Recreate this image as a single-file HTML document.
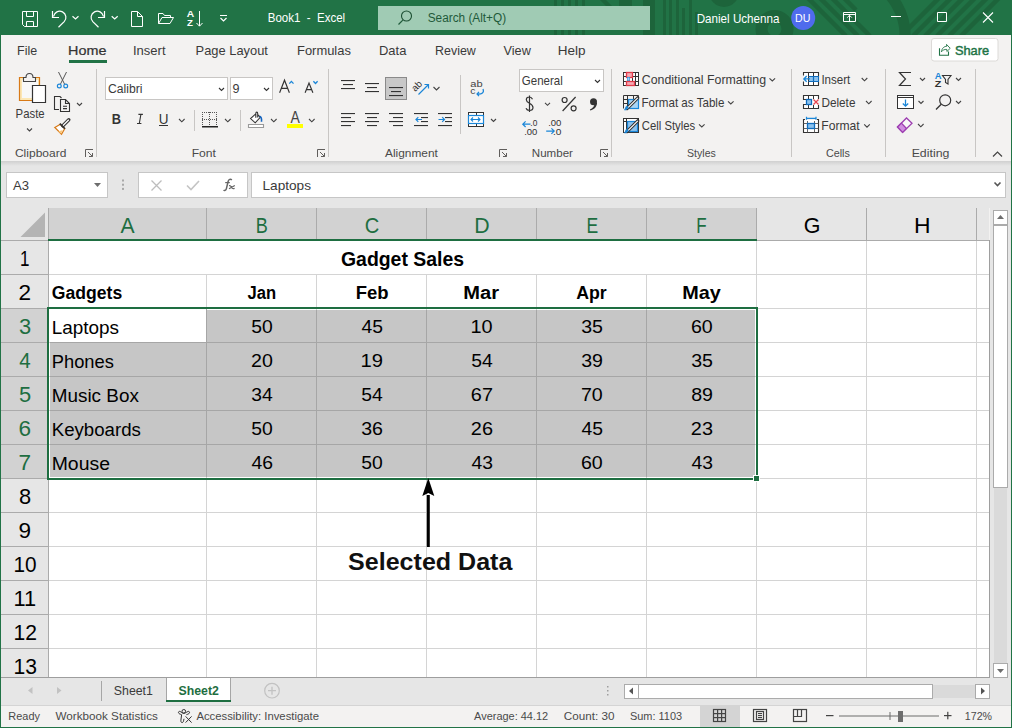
<!DOCTYPE html>
<html><head><meta charset="utf-8"><title>Excel</title>
<style>html,body{margin:0;padding:0;background:#f3f2f1;overflow:hidden}svg{display:block}text{white-space:pre;font-family:"Liberation Sans",sans-serif}</style>
</head><body>
<svg width="1012" height="728" viewBox="0 0 1012 728">
<rect x="0" y="0" width="1012" height="728" fill="#f3f2f1" />
<rect x="0" y="0" width="1012" height="35" fill="#217346" />
<defs><clipPath id="tb"><rect x="0" y="0" width="1012" height="35"/></clipPath></defs>
<g clip-path="url(#tb)" fill="#1d643b"><rect x="554" y="0" width="3" height="35"/><rect x="561" y="0" width="3" height="35"/><rect x="568" y="0" width="3" height="35"/><rect x="575" y="0" width="3" height="35"/><rect x="582" y="0" width="3" height="35"/><path d="M600,0 H606 L612,6 H606 Z"/><rect x="619" y="0" width="13" height="6"/><rect x="643" y="0" width="12" height="35"/><rect x="663" y="0" width="3" height="35"/><rect x="669" y="0" width="3" height="35"/><rect x="676" y="0" width="3" height="35"/><rect x="682" y="8" width="3" height="27"/><rect x="689" y="0" width="3" height="35"/><rect x="695" y="12" width="3" height="23"/><circle cx="724" cy="-8" r="15"/></g>
<g clip-path="url(#tb)" fill="none" stroke="#1d643b"><circle cx="774.5" cy="29" r="13" stroke-width="12"/><circle cx="850" cy="40" r="70" stroke-width="10" stroke="none"/><path d="M870,-20 A62,62 0 0 1 905,40" stroke-width="11"/><path d="M806,-4 L846,36 M818,-4 L858,36 M830,-4 L870,36 M842,-4 L856,10" stroke-width="4.5"/><path d="M941,-4 L901,36 M953,-4 L913,36 M965,-4 L925,36 M977,-4 L937,36 M989,-4 L949,36 M1001,-4 L961,36" stroke-width="4.5"/></g>
<g fill="none" stroke="#ffffff" stroke-width="1">
<path d="M22.5,11.5 H37.5 V26.5 H24.5 L22.5,24.5 Z M26.5,11.5 V16.5 H33.5 V11.5 M26.5,26.5 V21.5 H33.5 V26.5" fill="none" stroke="#fff" stroke-width="1" />
<path d="M52.5,11 V17.5 H59 M53.6,16.4 A6.2,6.2 0 1 1 64.2,21.7 L58.5,27.3" fill="none" stroke="#fff" stroke-width="1.2" />
<path d="M104.5,11 V17.5 H98 M103.4,16.4 A6.2,6.2 0 1 0 92.8,21.7 L98.5,27.3" fill="none" stroke="#fff" stroke-width="1.2" />
<path d="M72.5,16.2 L75.5,19 L78.5,16.2 M111.7,16.2 L114.7,19 L117.7,16.2" fill="none" stroke="#fff" stroke-width="1.2" />
<path d="M131.5,11.5 H137.5 L142.5,16.5 V26.5 H131.5 Z M137.5,11.5 V16.5 H142.5" fill="none" stroke="#fff" stroke-width="1" />
<path d="M158.5,23.5 V13.5 H163 L164.5,15.5 H170.5 V18 M158.5,23.5 H170 L173.5,17.5 H162 Z" fill="none" stroke="#fff" stroke-width="1" />
<path d="M199.5,11 V26 M196.5,23 L199.5,26.2 L202.5,23" fill="none" stroke="#fff" stroke-width="1" />
<path d="M220,15.5 H227 M220.5,18 L223.5,21 L226.5,18" fill="none" stroke="#fff" stroke-width="1.2" />
</g>
<text transform="translate(186.64,17.20) scale(1.2102,1)" font-family="Liberation Sans" font-size="8.53" font-weight="bold" fill="#fff">A</text>
<text transform="translate(187.05,26.20) scale(1.1351,1)" font-family="Liberation Sans" font-size="8.53" font-weight="bold" fill="#fff">Z</text>
<text transform="translate(267.80,21.80) scale(0.8998,1)" font-family="Liberation Sans" font-size="12.80" font-weight="normal" fill="#ffffff">Book1  -  Excel</text>
<rect x="378" y="6" width="272" height="24" fill="#a0cbb4" />
<circle cx="406.5" cy="16" r="5" fill="none" stroke="#1c4f33" stroke-width="1.1"/>
<path d="M398.5,24.5 L402.8,20.2" fill="none" stroke="#1f5a3a" stroke-width="1.2" />
<text transform="translate(427.73,22.00) scale(0.9442,1)" font-family="Liberation Sans" font-size="12.52" font-weight="normal" fill="#1f5a3a">Search (Alt+Q)</text>
<text transform="translate(696.69,22.70) scale(0.9744,1)" font-family="Liberation Sans" font-size="11.95" font-weight="normal" fill="#ffffff">Daniel Uchenna</text>
<circle cx="803.2" cy="18" r="12" fill="#4f6bed"/>
<text transform="translate(794.97,22.30) scale(0.9446,1)" font-family="Liberation Sans" font-size="11.24" font-weight="normal" fill="#ffffff">DU</text>
<g fill="none" stroke="#fff" stroke-width="1">
<path d="M843.5,12.5 H855.5 V21.5 H843.5 Z M843.5,14.5 H855.5 M849.5,21.5 V15.3 M847.2,17.6 L849.5,15.3 L851.8,17.6" fill="none" stroke="#fff" stroke-width="1" />
<path d="M891,16.5 H901" fill="none" stroke="#fff" stroke-width="1" />
<path d="M937.5,12.5 H946.5 V21.5 H937.5 Z" fill="none" stroke="#fff" stroke-width="1" />
<path d="M983,12.5 L993,22.5 M993,12.5 L983,22.5" fill="none" stroke="#fff" stroke-width="1.1" />
</g>
<text transform="translate(17.03,55.00) scale(0.9735,1)" font-family="Liberation Sans" font-size="12.80" font-weight="normal" fill="#3a3a3a">File</text>
<text transform="translate(132.98,55.00) scale(1.0175,1)" font-family="Liberation Sans" font-size="12.80" font-weight="normal" fill="#3a3a3a">Insert</text>
<text transform="translate(195.59,55.00) scale(1.0067,1)" font-family="Liberation Sans" font-size="12.80" font-weight="normal" fill="#3a3a3a">Page Layout</text>
<text transform="translate(296.99,55.00) scale(1.0107,1)" font-family="Liberation Sans" font-size="12.80" font-weight="normal" fill="#3a3a3a">Formulas</text>
<text transform="translate(378.99,55.00) scale(1.0146,1)" font-family="Liberation Sans" font-size="12.80" font-weight="normal" fill="#3a3a3a">Data</text>
<text transform="translate(435.03,55.00) scale(0.9726,1)" font-family="Liberation Sans" font-size="12.80" font-weight="normal" fill="#3a3a3a">Review</text>
<text transform="translate(503.60,55.00) scale(0.9903,1)" font-family="Liberation Sans" font-size="12.80" font-weight="normal" fill="#3a3a3a">View</text>
<text transform="translate(557.74,55.00) scale(1.0562,1)" font-family="Liberation Sans" font-size="12.80" font-weight="normal" fill="#3a3a3a">Help</text>
<text transform="translate(68.08,55.00) scale(1.1218,1)" font-family="Liberation Sans" font-size="12.80" font-weight="normal" fill="#333333" stroke="#333333" stroke-width="0.22">Home</text>
<rect x="69" y="60" width="38" height="3" fill="#217346" />
<rect x="931.5" y="38.5" width="66.5" height="22.5" rx="2.5" fill="#ffffff" stroke="#dcdad8"/>
<path d="M939.5,48.2 V55.3 H948.5 V51.5" fill="none" stroke="#217346" stroke-width="1.1" />
<path d="M941.4,51.8 C942,47.8 944.3,46.4 946.7,46.3 L946.5,44.4 L950.2,48.3 L946.9,51.5 L946.8,49.4 C944.5,49.2 942.6,50.2 941.4,51.8 Z" fill="none" stroke="#217346" stroke-width="0.9" />
<text transform="translate(954.90,54.90) scale(0.9909,1)" font-family="Liberation Sans" font-size="12.94" font-weight="normal" fill="#217346" stroke="#217346" stroke-width="0.45">Share</text>
<rect x="96" y="69" width="1" height="88" fill="#c8c6c4" />
<rect x="328" y="69" width="1" height="88" fill="#c8c6c4" />
<rect x="611" y="69" width="1" height="88" fill="#c8c6c4" />
<rect x="791" y="69" width="1" height="88" fill="#c8c6c4" />
<rect x="885" y="69" width="1" height="88" fill="#c8c6c4" />
<rect x="975" y="69" width="1" height="88" fill="#c8c6c4" />
<rect x="460" y="75" width="1" height="59" fill="#c8c6c4" />
<rect x="194" y="110" width="1" height="21" fill="#c8c6c4" />
<rect x="240" y="110" width="1" height="21" fill="#c8c6c4" />
<defs><linearGradient id="sh" x1="0" y1="0" x2="0" y2="1"><stop offset="0" stop-color="#d0d0d0"/><stop offset="1" stop-color="#e6e6e6"/></linearGradient></defs>
<rect x="1" y="161" width="1010" height="5" fill="url(#sh)" />
<rect x="1" y="166" width="1010" height="42" fill="#e6e6e6" />
<text transform="translate(14.94,156.60) scale(1.0696,1)" font-family="Liberation Sans" font-size="11.24" font-weight="normal" fill="#4a4a4a">Clipboard</text>
<text transform="translate(191.65,156.60) scale(1.0812,1)" font-family="Liberation Sans" font-size="11.24" font-weight="normal" fill="#4a4a4a">Font</text>
<text transform="translate(385.00,156.60) scale(1.0580,1)" font-family="Liberation Sans" font-size="11.24" font-weight="normal" fill="#4a4a4a">Alignment</text>
<text transform="translate(531.80,156.60) scale(1.0300,1)" font-family="Liberation Sans" font-size="11.24" font-weight="normal" fill="#4a4a4a">Number</text>
<text transform="translate(687.07,156.60) scale(0.9400,1)" font-family="Liberation Sans" font-size="11.24" font-weight="normal" fill="#4a4a4a">Styles</text>
<text transform="translate(825.90,156.60) scale(0.9587,1)" font-family="Liberation Sans" font-size="11.24" font-weight="normal" fill="#4a4a4a">Cells</text>
<text transform="translate(911.64,156.60) scale(1.0991,1)" font-family="Liberation Sans" font-size="11.24" font-weight="normal" fill="#4a4a4a">Editing</text>
<path d="M85.5,157 V149.5 H93 M88,152 L92.5,156.5 M89,156.5 H92.5 V153" fill="none" stroke="#605e5c" stroke-width="1" />
<path d="M317.5,157 V149.5 H325 M320,152 L324.5,156.5 M321,156.5 H324.5 V153" fill="none" stroke="#605e5c" stroke-width="1" />
<path d="M499.5,157 V149.5 H507 M502,152 L506.5,156.5 M503,156.5 H506.5 V153" fill="none" stroke="#605e5c" stroke-width="1" />
<path d="M600.5,157 V149.5 H608 M603,152 L607.5,156.5 M604,156.5 H607.5 V153" fill="none" stroke="#605e5c" stroke-width="1" />
<path d="M993,156.5 L997.5,152 L1002,156.5" fill="none" stroke="#444" stroke-width="1.2" />
<path d="M19.5,77.5 H39.5 V100.5 H19.5 Z" fill="#fce7b5" stroke="#d87a17" stroke-width="1.2" />
<rect x="22" y="80" width="16" height="18" fill="#f8f8f8" />
<path d="M23.5,81.5 V77.5 H26 C26,75 27.5,73.5 29.5,73.5 C31.5,73.5 33,75 33,77.5 H35.5 V81.5 Z" fill="#f3f2f1" stroke="#444" stroke-width="1.1" />
<path d="M32.5,85.5 H45.5 V102.5 H32.5 Z" fill="#ffffff" stroke="#333" stroke-width="1.2" />
<text transform="translate(15.61,117.90) scale(0.9287,1)" font-family="Liberation Sans" font-size="12.23" font-weight="normal" fill="#3a3a3a">Paste</text>
<path d="M27,128.5 L29.5,131 L32,128.5" fill="none" stroke="#444" stroke-width="1.1" />
<path d="M58.5,72 L64.5,84 M66.5,72 L60.5,84" fill="none" stroke="#555" stroke-width="1" />
<circle cx="59.3" cy="86" r="1.9" fill="none" stroke="#1a86d8" stroke-width="1.2"/><circle cx="65.7" cy="86" r="1.9" fill="none" stroke="#1a86d8" stroke-width="1.2"/>
<path d="M59,109.5 H54.5 V96.5 H60 L61.5,98 M60.5,111.5 V99.5 H65.5 L69.5,103.5 V111.5 Z M65.5,99.5 V103.5 H69.5 M63,106.3 H67 M63,108.6 H67" fill="none" stroke="#333" stroke-width="1.1" />
<path d="M77,103 L79.5,105.5 L82,103" fill="none" stroke="#444" stroke-width="1.1" />
<path d="M54.8,127.5 L60.3,124.3 L64.7,128.7 L61.5,134.3 Z" fill="#ffffff" stroke="#d87a17" stroke-width="1.3" />
<path d="M58.3,131.5 L62.7,130 L61.3,133.7 Z" fill="#f9c77c" stroke="none" stroke-width="1" />
<path d="M62.8,125.8 L68.8,119.8" fill="none" stroke="#333" stroke-width="3.4" stroke-linecap="round"/>
<path d="M62.8,125.8 L68.8,119.8" fill="none" stroke="#fff" stroke-width="1.3" />
<path d="M59.8,123.6 L65,128.8" fill="none" stroke="#333" stroke-width="1.6" />
<rect x="105.5" y="77.5" width="122" height="22" fill="#ffffff" stroke="#c8c6c4" stroke-width="1" />
<text transform="translate(108.03,92.80) scale(0.9610,1)" font-family="Liberation Sans" font-size="12.66" font-weight="normal" fill="#3a3a3a">Calibri</text>
<path d="M219,88 L221.5,90.5 L224,88" fill="none" stroke="#333" stroke-width="1.1" />
<rect x="230.5" y="77.5" width="42" height="22" fill="#ffffff" stroke="#c8c6c4" stroke-width="1" />
<text transform="translate(232.61,93.00) scale(1.0536,1)" font-family="Liberation Sans" font-size="11.95" font-weight="normal" fill="#3a3a3a">9</text>
<path d="M264,88 L266.5,90.5 L269,88" fill="none" stroke="#333" stroke-width="1.1" />
<path d="M279.6,92.7 L284.5,80.2 L289.4,92.7 M281.3,88.3 H287.7" fill="none" stroke="#333" stroke-width="1.15" />
<path d="M289.3,83.6 L291.4,81.4 L293.5,83.6" fill="none" stroke="#1a86d8" stroke-width="1.3" />
<path d="M305.1,92.7 L309,83 L312.9,92.7 M306.4,89.6 H311.6" fill="none" stroke="#333" stroke-width="1.15" />
<path d="M313.4,81.3 L315.5,83.5 L317.6,81.3" fill="none" stroke="#1a86d8" stroke-width="1.3" />
<text transform="translate(111.70,123.70) scale(0.9278,1)" font-family="Liberation Sans" font-size="13.80" font-weight="bold" fill="#333">B</text>
<path d="M138.4,114.4 H142.9 M137,123.5 H141.4 M140.9,114.4 L139.3,123.5" fill="none" stroke="#333" stroke-width="1.1" />
<text transform="translate(158.66,123.70) scale(0.9767,1)" font-family="Liberation Sans" font-size="13.80" font-weight="normal" fill="#333">U</text>
<rect x="159" y="125" width="9" height="1" fill="#333" />
<path d="M179,119 L181.8,121.8 L184.6,119" fill="none" stroke="#444" stroke-width="1.1" />
<path d="M225,119 L227.8,121.8 L230.6,119" fill="none" stroke="#444" stroke-width="1.1" />
<path d="M271,119 L273.8,121.8 L276.6,119" fill="none" stroke="#444" stroke-width="1.1" />
<path d="M309,119 L311.8,121.8 L314.6,119" fill="none" stroke="#444" stroke-width="1.1" />
<g fill="#555"><rect x="202" y="112" width="1" height="1"/><rect x="202" y="119" width="1" height="1"/><rect x="204" y="112" width="1" height="1"/><rect x="204" y="119" width="1" height="1"/><rect x="206" y="112" width="1" height="1"/><rect x="206" y="119" width="1" height="1"/><rect x="208" y="112" width="1" height="1"/><rect x="208" y="119" width="1" height="1"/><rect x="210" y="112" width="1" height="1"/><rect x="210" y="119" width="1" height="1"/><rect x="212" y="112" width="1" height="1"/><rect x="212" y="119" width="1" height="1"/><rect x="214" y="112" width="1" height="1"/><rect x="214" y="119" width="1" height="1"/><rect x="216" y="112" width="1" height="1"/><rect x="216" y="119" width="1" height="1"/><rect x="202" y="112" width="1" height="1"/><rect x="209" y="112" width="1" height="1"/><rect x="216" y="112" width="1" height="1"/><rect x="202" y="114" width="1" height="1"/><rect x="209" y="114" width="1" height="1"/><rect x="216" y="114" width="1" height="1"/><rect x="202" y="116" width="1" height="1"/><rect x="209" y="116" width="1" height="1"/><rect x="216" y="116" width="1" height="1"/><rect x="202" y="118" width="1" height="1"/><rect x="209" y="118" width="1" height="1"/><rect x="216" y="118" width="1" height="1"/><rect x="202" y="120" width="1" height="1"/><rect x="209" y="120" width="1" height="1"/><rect x="216" y="120" width="1" height="1"/><rect x="202" y="122" width="1" height="1"/><rect x="209" y="122" width="1" height="1"/><rect x="216" y="122" width="1" height="1"/><rect x="202" y="124" width="1" height="1"/><rect x="209" y="124" width="1" height="1"/><rect x="216" y="124" width="1" height="1"/></g>
<rect x="202" y="126" width="16" height="1.5" fill="#222" />
<path d="M248.5,124.5 H263.5 V127.5 H248.5 Z" fill="#fff" stroke="#9a9a9a" stroke-width="1.1" />
<path d="M255.8,113.8 L250.6,118.6 L255.2,122.8 L260.3,117.3 L257.5,114.5 M255.8,117.8 V113.8 C255.8,111.6 257.7,111.6 257.7,113.8 V117.5" fill="#fff" stroke="#333" stroke-width="1.1" />
<path d="M259.6,116.4 C261.2,116.8 261.8,118.5 261.5,121.8" fill="none" stroke="#1565c0" stroke-width="1.6" />
<text transform="translate(290.50,123.00) scale(0.8943,1)" font-family="Liberation Sans" font-size="15.64" font-weight="normal" fill="#444">A</text>
<rect x="287" y="124" width="16" height="4" fill="#ffff00" />
<rect x="341" y="80" width="14" height="1.1" fill="#333" />
<rect x="343" y="84" width="10" height="1.1" fill="#333" />
<rect x="341" y="88" width="14" height="1.1" fill="#333" />
<rect x="365" y="83" width="14" height="1.1" fill="#333" />
<rect x="367" y="87" width="10" height="1.1" fill="#333" />
<rect x="365" y="91" width="14" height="1.1" fill="#333" />
<rect x="385.5" y="77.5" width="21" height="22" fill="#c8c8c8" stroke="#8a8a8a" stroke-width="1" />
<rect x="389" y="87" width="14" height="1.1" fill="#333" />
<rect x="391" y="91" width="10" height="1.1" fill="#333" />
<rect x="389" y="95" width="14" height="1.1" fill="#333" />
<text transform="translate(415.2,92) rotate(-45)" font-family="Liberation Sans" font-size="9.6" fill="#333">ab</text>
<path d="M418.5,94.5 L428.5,84.5 M424.5,84.5 H428.5 V88.5" fill="none" stroke="#1a86d8" stroke-width="1.2" />
<path d="M433.5,87 L436.5,90 L439.5,87" fill="none" stroke="#444" stroke-width="1.1" />
<rect x="341" y="113" width="14" height="1.1" fill="#333" />
<rect x="341" y="117" width="10" height="1.1" fill="#333" />
<rect x="341" y="121" width="14" height="1.1" fill="#333" />
<rect x="341" y="125" width="10" height="1.1" fill="#333" />
<rect x="365" y="113" width="14" height="1.1" fill="#333" />
<rect x="367" y="117" width="10" height="1.1" fill="#333" />
<rect x="365" y="121" width="14" height="1.1" fill="#333" />
<rect x="367" y="125" width="10" height="1.1" fill="#333" />
<rect x="389" y="113" width="14" height="1.1" fill="#333" />
<rect x="393" y="117" width="10" height="1.1" fill="#333" />
<rect x="389" y="121" width="14" height="1.1" fill="#333" />
<rect x="393" y="125" width="10" height="1.1" fill="#333" />
<rect x="414" y="113" width="14" height="1.1" fill="#333" />
<rect x="421" y="117" width="7" height="1.1" fill="#333" />
<rect x="421" y="121" width="7" height="1.1" fill="#333" />
<rect x="414" y="125" width="14" height="1.1" fill="#333" />
<path d="M416,119.5 H422 M418.3,117.2 L416,119.5 L418.3,121.8" fill="none" stroke="#1a86d8" stroke-width="1.2" />
<rect x="438" y="113" width="14" height="1.1" fill="#333" />
<rect x="445" y="117" width="7" height="1.1" fill="#333" />
<rect x="445" y="121" width="7" height="1.1" fill="#333" />
<rect x="438" y="125" width="14" height="1.1" fill="#333" />
<path d="M438.5,119.5 H444.5 M442.2,117.2 L444.5,119.5 L442.2,121.8" fill="none" stroke="#1a86d8" stroke-width="1.2" />
<text transform="translate(470.25,87.40) scale(1.1101,1)" font-family="Liberation Sans" font-size="9.96" font-weight="normal" fill="#444">ab</text>
<text transform="translate(470.28,94.30) scale(1.2361,1)" font-family="Liberation Sans" font-size="8.39" font-weight="normal" fill="#444">c</text>
<path d="M483,89 C484.5,92.5 482,94.5 477,94 M479,91.8 L477,94 L479,96.2" fill="none" stroke="#1a86d8" stroke-width="1.2" />
<rect x="468.5" y="112.5" width="15" height="14" fill="#fff" stroke="#333" stroke-width="1" />
<rect x="476" y="112" width="1" height="15" fill="#333" />
<rect x="468.5" y="115.5" width="15" height="8" fill="#fff" stroke="#1a86d8" stroke-width="1.2" />
<path d="M471,119.5 H480 M473,117.5 L471,119.5 L473,121.5 M478,117.5 L480,119.5 L478,121.5" fill="none" stroke="#1a86d8" stroke-width="1.1" />
<path d="M491,119 L493.5,121.5 L496,119" fill="none" stroke="#444" stroke-width="1.1" />
<rect x="519.5" y="69.5" width="84" height="22" fill="#ffffff" stroke="#c8c6c4" stroke-width="1" />
<text transform="translate(521.86,85.00) scale(0.9291,1)" font-family="Liberation Sans" font-size="12.37" font-weight="normal" fill="#3a3a3a">General</text>
<path d="M595,80 L597.5,82.5 L600,80" fill="none" stroke="#333" stroke-width="1.1" />
<path d="M532.5,99.2 C531.8,97.6 530.6,97 529.4,97 C527.5,97 526.3,98.3 526.3,99.8 C526.3,103.5 533,103 533,107.5 C533,109.2 531.6,110.5 529.5,110.5 C528,110.5 526.6,109.8 526,108.3 M529.5,95.5 V112" fill="none" stroke="#333" stroke-width="1.2" />
<path d="M545,102.8 L547.5,105.3 L550,102.8" fill="none" stroke="#444" stroke-width="1.1" />
<circle cx="564.6" cy="100" r="2.5" fill="none" stroke="#333" stroke-width="1.2"/><circle cx="573.6" cy="108.3" r="2.5" fill="none" stroke="#333" stroke-width="1.2"/>
<path d="M562.6,111 L575.6,97" fill="none" stroke="#333" stroke-width="1.2" />
<circle cx="593.5" cy="101.8" r="3.5" fill="#333"/>
<path d="M597,102.3 C597.2,106.2 594.8,109.3 590.2,110.6 L589.9,109.5 C592.6,108.4 594.2,106.8 594.4,104.6 Z" fill="#333" stroke="none" stroke-width="1" />
<text transform="translate(530.35,126.30) scale(0.9780,1)" font-family="Liberation Sans" font-size="8.53" font-weight="normal" fill="#333">.0</text>
<text transform="translate(524.16,134.50) scale(1.1108,1)" font-family="Liberation Sans" font-size="8.53" font-weight="normal" fill="#333">.00</text>
<path d="M522.8,124.2 H530.5 M525.6,121.4 L522.8,124.2 L525.6,127" fill="none" stroke="#1a86d8" stroke-width="1.2" />
<text transform="translate(548.15,126.30) scale(1.1199,1)" font-family="Liberation Sans" font-size="8.53" font-weight="normal" fill="#333">.00</text>
<text transform="translate(553.01,134.50) scale(1.1864,1)" font-family="Liberation Sans" font-size="8.53" font-weight="normal" fill="#333">.0</text>
<path d="M546.2,131.1 H554.2 M551.4,128.3 L554.2,131.1 L551.4,133.9" fill="none" stroke="#1a86d8" stroke-width="1.2" />
<rect x="623.5" y="72.5" width="15" height="13" fill="#fff" stroke="#333" stroke-width="1" />
<rect x="627" y="72" width="1" height="14" fill="#333" />
<rect x="632" y="72" width="1" height="14" fill="#333" />
<rect x="635" y="72" width="1" height="14" fill="#333" />
<rect x="623" y="76" width="16" height="1" fill="#333" />
<rect x="623" y="81" width="16" height="1" fill="#333" />
<rect x="626.5" y="72.5" width="6" height="5" fill="#f6a9b3" stroke="#e03c4a" stroke-width="1.3" />
<rect x="627" y="77" width="3" height="4" fill="#1a86d8" />
<rect x="627.5" y="77.5" width="2" height="3" fill="#9fd0f5" />
<rect x="626.5" y="81.5" width="8" height="4" fill="#f6a9b3" stroke="#e03c4a" stroke-width="1.3" />
<text transform="translate(641.72,84.40) scale(0.9456,1)" font-family="Liberation Sans" font-size="13.08" font-weight="normal" fill="#3a3a3a">Conditional Formatting</text>
<path d="M769.5,78.3 L772.3,81 L775.1,78.3" fill="none" stroke="#444" stroke-width="1.1" />
<path d="M623.5,108.5 V95.5 H638.5 V101 M623.5,99.5 H638 M623.5,103.5 H628 M627.5,95.5 V108 M633.5,95.5 V99" fill="none" stroke="#333" stroke-width="1" />
<rect x="628.5" y="99.5" width="10" height="9" fill="#a8d4f5" stroke="#1a86d8" stroke-width="1.2" />
<path d="M627,108.6 L637.8,97.8" fill="none" stroke="#333" stroke-width="3.2" stroke-linecap="round"/>
<path d="M627,108.6 L637.8,97.8" fill="none" stroke="#fff" stroke-width="1.2" />
<path d="M624.5,110 C626,110 627.3,109.3 628.3,107.5 L626.5,106 C625.5,107.5 625.5,109 624.5,110 Z" fill="#1a86d8" stroke="#1a86d8" stroke-width="0.8" />
<text transform="translate(641.39,107.30) scale(0.8878,1)" font-family="Liberation Sans" font-size="13.08" font-weight="normal" fill="#3a3a3a">Format as Table</text>
<path d="M728,101.3 L730.8,104 L733.6,101.3" fill="none" stroke="#444" stroke-width="1.1" />
<rect x="623.5" y="118.5" width="15" height="14" fill="#fff" stroke="#333" stroke-width="1" />
<rect x="623" y="121" width="16" height="1" fill="#333" />
<rect x="626" y="118" width="1" height="15" fill="#333" />
<rect x="627.5" y="121.5" width="10" height="10" fill="#8cc2ee" stroke="#1a86d8" stroke-width="1.2" />
<path d="M627,131.6 L637.8,120.8" fill="none" stroke="#333" stroke-width="3.2" stroke-linecap="round"/>
<path d="M627,131.6 L637.8,120.8" fill="none" stroke="#fff" stroke-width="1.2" />
<path d="M624.5,133 C626,133 627.3,132.3 628.3,130.5 L626.5,129 C625.5,130.5 625.5,132 624.5,133 Z" fill="#1a86d8" stroke="#1a86d8" stroke-width="0.8" />
<text transform="translate(641.77,129.90) scale(0.8654,1)" font-family="Liberation Sans" font-size="13.08" font-weight="normal" fill="#3a3a3a">Cell Styles</text>
<path d="M699,124.3 L701.8,127 L704.6,124.3" fill="none" stroke="#444" stroke-width="1.1" />
<rect x="804" y="73" width="14" height="12" fill="#ffffff" />
<path d="M803.5,75.5 V72.5 H818.5 V85.5 H803.5 V81.5" fill="none" stroke="#333" stroke-width="1.1" />
<rect x="808" y="72" width="1" height="14" fill="#333" />
<rect x="813" y="72" width="1" height="14" fill="#333" />
<rect x="809" y="76" width="10" height="6" fill="#8cc2ee" />
<path d="M808.5,76.5 H818.5 M808.5,81.5 H818.5 M813.5,76.5 V81.5" fill="none" stroke="#0f6cbd" stroke-width="1.2" />
<rect x="818" y="76" width="1" height="6" fill="#0f6cbd" />
<path d="M803.9,78.9 H810 M806.7,76.1 L803.9,78.9 L806.7,81.7" fill="none" stroke="#1a86d8" stroke-width="1.4" />
<text transform="translate(821.40,83.90) scale(0.9469,1)" font-family="Liberation Sans" font-size="12.23" font-weight="normal" fill="#3a3a3a">Insert</text>
<path d="M861.7,78 L864.5,80.8 L867.3,78" fill="none" stroke="#444" stroke-width="1.1" />
<rect x="804" y="96" width="14" height="12" fill="#ffffff" />
<path d="M806,99.5 H803.5 V95.5 H818.5 V99 M806,104.5 H803.5 V108.5 H818.5 V105" fill="none" stroke="#333" stroke-width="1.1" />
<path d="M808.5,95.5 V99 M813.5,95.5 V99 M808.5,105 V108.5 M813.5,105 V108.5" fill="none" stroke="#333" stroke-width="1" />
<rect x="806" y="99" width="6" height="6" fill="#8cc2ee" />
<rect x="806.5" y="99.5" width="5" height="5" fill="none" stroke="#0f6cbd" stroke-width="1.3" />
<path d="M813.5,99.5 L818.5,104.5 M818.5,99.5 L813.5,104.5" fill="none" stroke="#e8464f" stroke-width="1.3" />
<text transform="translate(821.38,107.00) scale(0.9645,1)" font-family="Liberation Sans" font-size="12.23" font-weight="normal" fill="#3a3a3a">Delete</text>
<path d="M866,101 L868.8,103.8 L871.6,101" fill="none" stroke="#444" stroke-width="1.1" />
<rect x="804" y="120" width="14" height="12" fill="#ffffff" />
<path d="M805,119.5 H803.5 V132.5 H818.5 V119.5 H817" fill="none" stroke="#333" stroke-width="1.1" />
<path d="M803.5,123.5 H818.5 M803.5,128.5 H818.5 M807.5,121 V132.5 M814.5,121 V132.5" fill="none" stroke="#555" stroke-width="0.9" />
<rect x="808" y="124" width="6" height="4" fill="#8cc2ee" />
<rect x="807.5" y="123.5" width="7" height="5" fill="none" stroke="#0f6cbd" stroke-width="1.3" />
<path d="M806.5,118.3 H816 M806.5,116.8 V119.8 M816,116.8 V119.8" fill="none" stroke="#1a86d8" stroke-width="1.2" />
<text transform="translate(821.35,129.80) scale(0.9801,1)" font-family="Liberation Sans" font-size="12.37" font-weight="normal" fill="#3a3a3a">Format</text>
<path d="M864.2,124.4 L867,127.2 L869.8,124.4" fill="none" stroke="#444" stroke-width="1.1" />
<path d="M911,72.5 H899.5 L905.5,79 L899.5,85.5 H911" fill="none" stroke="#333" stroke-width="1.2" />
<path d="M920,78 L922.5,80.5 L925,78" fill="none" stroke="#444" stroke-width="1.1" />
<text transform="translate(934.85,78.50) scale(1.0072,1)" font-family="Liberation Sans" font-size="9.39" font-weight="bold" fill="#1a86d8">A</text>
<text transform="translate(934.83,86.90) scale(1.1425,1)" font-family="Liberation Sans" font-size="9.39" font-weight="bold" fill="#333">Z</text>
<path d="M942.5,75.5 H951 L948,79.5 V84 L945.5,82.5 V79.5 Z" fill="none" stroke="#333" stroke-width="1.1" />
<path d="M956,78 L958.5,80.5 L961,78" fill="none" stroke="#444" stroke-width="1.1" />
<rect x="897.5" y="95.5" width="16" height="13" fill="#fff" stroke="#333" stroke-width="1" />
<rect x="897" y="97" width="17" height="1" fill="#333" />
<path d="M905.5,99.5 V106 M902.8,103.5 L905.5,106.2 L908.2,103.5" fill="none" stroke="#1a86d8" stroke-width="1.3" />
<path d="M918.5,101 L921,103.5 L923.5,101" fill="none" stroke="#444" stroke-width="1.1" />
<circle cx="945.2" cy="100.3" r="5.5" fill="none" stroke="#333" stroke-width="1.2"/>
<path d="M941.2,104.3 L936,109.5" fill="none" stroke="#333" stroke-width="1.3" />
<path d="M956,101 L958.5,103.5 L961,101" fill="none" stroke="#444" stroke-width="1.1" />
<path d="M897.5,127 L906.5,118 L912,123.3 L902.6,132.4 Z" fill="#f8f8f8" stroke="#9d3eb1" stroke-width="1.3" />
<path d="M897.5,127 L901.4,123.1 L906.5,128.5 L902.6,132.4 Z" fill="#d08ee0" stroke="#9d3eb1" stroke-width="1.3" />
<path d="M918,124 L920.8,126.8 L923.6,124" fill="none" stroke="#444" stroke-width="1.1" />
<rect x="6.5" y="172.5" width="101" height="25" fill="#ffffff" stroke="#c6c6c6" stroke-width="1" />
<text transform="translate(13.00,190.00) scale(1.0239,1)" font-family="Liberation Sans" font-size="12.80" font-weight="normal" fill="#3a3a3a">A3</text>
<path d="M94,183 H101 L97.5,187 Z" fill="#6d6d6d" stroke="none" stroke-width="1" />
<rect x="122" y="179.5" width="2" height="2" fill="#a8a8a8" />
<rect x="122" y="183.7" width="2" height="2" fill="#a8a8a8" />
<rect x="122" y="187.9" width="2" height="2" fill="#a8a8a8" />
<rect x="138.5" y="172.5" width="109" height="25" fill="#ffffff" stroke="#c6c6c6" stroke-width="1" />
<path d="M151.5,180.5 L161.5,190.5 M161.5,180.5 L151.5,190.5" fill="none" stroke="#bdbdbd" stroke-width="1.3" />
<path d="M187,185.5 L191,189.5 L199,181" fill="none" stroke="#c4c4c4" stroke-width="1.6" />
<path d="M231.8,180 C230.6,178.6 228.6,179.2 228.1,181.5 L226.4,188.6 C225.9,190.6 224.4,190.9 223.6,190" fill="none" stroke="#666" stroke-width="1.5" />
<path d="M225.2,182.6 H229.8" fill="none" stroke="#666" stroke-width="1.2" />
<path d="M229,185.6 C230.6,185.2 231.2,186.6 231.6,187.4 C232,188.4 233.2,188.9 234.6,188.4 M234.8,185.4 L229,188.8" fill="none" stroke="#666" stroke-width="1.2" />
<rect x="251.5" y="172.5" width="754" height="25" fill="#ffffff" stroke="#c6c6c6" stroke-width="1" />
<text transform="translate(262.54,190.30) scale(1.0646,1)" font-family="Liberation Sans" font-size="12.80" font-weight="normal" fill="#3a3a3a">Laptops</text>
<path d="M994.5,182.5 L997.5,185.5 L1000.5,182.5" fill="none" stroke="#555" stroke-width="1.6" />
<rect x="1" y="208" width="988" height="33" fill="#e6e6e6" />
<rect x="49" y="208" width="707" height="32" fill="#d2d2d2" />
<rect x="206" y="208" width="1" height="32" fill="#ababab" />
<rect x="316" y="208" width="1" height="32" fill="#ababab" />
<rect x="426" y="208" width="1" height="32" fill="#ababab" />
<rect x="536" y="208" width="1" height="32" fill="#ababab" />
<rect x="646" y="208" width="1" height="32" fill="#ababab" />
<rect x="756" y="208" width="1" height="32" fill="#ababab" />
<rect x="866" y="208" width="1" height="32" fill="#ababab" />
<rect x="976" y="208" width="1" height="32" fill="#ababab" />
<rect x="48" y="208" width="1" height="33" fill="#ababab" />
<rect x="756" y="240" width="233" height="1" fill="#ababab" />
<rect x="48" y="239" width="709" height="2" fill="#1e6e41" />
<path d="M45,212.5 V237 H20.5 Z" fill="#b4b4b4" stroke="none" stroke-width="1" />
<rect x="1" y="240" width="47" height="1" fill="#ababab" />
<rect x="1" y="241" width="47" height="436" fill="#e6e6e6" />
<rect x="1" y="309" width="46" height="170" fill="#d2d2d2" />
<rect x="1" y="274" width="47" height="1" fill="#ababab" />
<rect x="1" y="308" width="47" height="1" fill="#ababab" />
<rect x="1" y="342" width="47" height="1" fill="#ababab" />
<rect x="1" y="376" width="47" height="1" fill="#ababab" />
<rect x="1" y="410" width="47" height="1" fill="#ababab" />
<rect x="1" y="444" width="47" height="1" fill="#ababab" />
<rect x="1" y="478" width="47" height="1" fill="#ababab" />
<rect x="1" y="512" width="47" height="1" fill="#ababab" />
<rect x="1" y="546" width="47" height="1" fill="#ababab" />
<rect x="1" y="580" width="47" height="1" fill="#ababab" />
<rect x="1" y="614" width="47" height="1" fill="#ababab" />
<rect x="1" y="648" width="47" height="1" fill="#ababab" />
<rect x="48" y="241" width="1" height="436" fill="#ababab" />
<rect x="49" y="241" width="940" height="436" fill="#ffffff" />
<rect x="206" y="241" width="1" height="436" fill="#d4d4d4" />
<rect x="316" y="241" width="1" height="436" fill="#d4d4d4" />
<rect x="426" y="241" width="1" height="436" fill="#d4d4d4" />
<rect x="536" y="241" width="1" height="436" fill="#d4d4d4" />
<rect x="646" y="241" width="1" height="436" fill="#d4d4d4" />
<rect x="756" y="241" width="1" height="436" fill="#d4d4d4" />
<rect x="866" y="241" width="1" height="436" fill="#d4d4d4" />
<rect x="976" y="241" width="1" height="436" fill="#d4d4d4" />
<rect x="49" y="274" width="940" height="1" fill="#d4d4d4" />
<rect x="49" y="308" width="940" height="1" fill="#d4d4d4" />
<rect x="49" y="342" width="940" height="1" fill="#d4d4d4" />
<rect x="49" y="376" width="940" height="1" fill="#d4d4d4" />
<rect x="49" y="410" width="940" height="1" fill="#d4d4d4" />
<rect x="49" y="444" width="940" height="1" fill="#d4d4d4" />
<rect x="49" y="478" width="940" height="1" fill="#d4d4d4" />
<rect x="49" y="512" width="940" height="1" fill="#d4d4d4" />
<rect x="49" y="546" width="940" height="1" fill="#d4d4d4" />
<rect x="49" y="580" width="940" height="1" fill="#d4d4d4" />
<rect x="49" y="614" width="940" height="1" fill="#d4d4d4" />
<rect x="49" y="648" width="940" height="1" fill="#d4d4d4" />
<rect x="206" y="241" width="550" height="33" fill="#ffffff" />
<rect x="50" y="310" width="705" height="167" fill="#c6c6c6" />
<rect x="206" y="310" width="1" height="167" fill="#a6a6a6" />
<rect x="316" y="310" width="1" height="167" fill="#a6a6a6" />
<rect x="426" y="310" width="1" height="167" fill="#a6a6a6" />
<rect x="536" y="310" width="1" height="167" fill="#a6a6a6" />
<rect x="646" y="310" width="1" height="167" fill="#a6a6a6" />
<rect x="50" y="342" width="705" height="1" fill="#a6a6a6" />
<rect x="50" y="376" width="705" height="1" fill="#a6a6a6" />
<rect x="50" y="410" width="705" height="1" fill="#a6a6a6" />
<rect x="50" y="444" width="705" height="1" fill="#a6a6a6" />
<rect x="49" y="309" width="157" height="33" fill="#ffffff" />
<rect x="206" y="309" width="1" height="33" fill="#a6a6a6" />
<rect x="50" y="342" width="156" height="1" fill="#a6a6a6" />
<rect x="47" y="307" width="711" height="2" fill="#1e6e41" />
<rect x="47" y="478" width="707" height="2" fill="#1e6e41" />
<rect x="47" y="307" width="2" height="173" fill="#1e6e41" />
<rect x="756" y="307" width="2" height="169" fill="#1e6e41" />
<rect x="753" y="475" width="7" height="7" fill="#ffffff" />
<rect x="754" y="476" width="5" height="5" fill="#1e6e41" />
<rect x="989" y="240" width="1" height="438" fill="#9e9e9e" />
<rect x="1" y="677" width="989" height="1" fill="#9e9e9e" />
<text transform="translate(120.40,232.70) scale(0.9587,1)" font-family="Liberation Sans" font-size="22.04" font-weight="normal" fill="#1e6e41">A</text>
<text transform="translate(255.69,232.70) scale(0.8212,1)" font-family="Liberation Sans" font-size="22.04" font-weight="normal" fill="#1e6e41">B</text>
<text transform="translate(364.66,232.70) scale(0.9135,1)" font-family="Liberation Sans" font-size="22.04" font-weight="normal" fill="#1e6e41">C</text>
<text transform="translate(474.33,232.70) scale(0.9677,1)" font-family="Liberation Sans" font-size="22.04" font-weight="normal" fill="#1e6e41">D</text>
<text transform="translate(586.43,232.70) scale(0.7963,1)" font-family="Liberation Sans" font-size="22.04" font-weight="normal" fill="#1e6e41">E</text>
<text transform="translate(696.17,232.70) scale(0.7712,1)" font-family="Liberation Sans" font-size="22.04" font-weight="normal" fill="#1e6e41">F</text>
<text transform="translate(803.79,232.70) scale(0.9747,1)" font-family="Liberation Sans" font-size="22.04" font-weight="normal" fill="#000000">G</text>
<text transform="translate(913.91,232.70) scale(1.0403,1)" font-family="Liberation Sans" font-size="22.04" font-weight="normal" fill="#000000">H</text>
<text transform="translate(19.99,266.00) scale(0.7468,1)" font-family="Liberation Sans" font-size="22.76" font-weight="normal" fill="#000000">1</text>
<text transform="translate(18.54,300.00) scale(0.9938,1)" font-family="Liberation Sans" font-size="22.76" font-weight="normal" fill="#000000">2</text>
<text transform="translate(18.92,334.00) scale(0.9617,1)" font-family="Liberation Sans" font-size="22.76" font-weight="normal" fill="#1e6e41">3</text>
<text transform="translate(19.28,368.00) scale(0.9034,1)" font-family="Liberation Sans" font-size="22.76" font-weight="normal" fill="#1e6e41">4</text>
<text transform="translate(18.92,402.00) scale(0.9617,1)" font-family="Liberation Sans" font-size="22.76" font-weight="normal" fill="#1e6e41">5</text>
<text transform="translate(18.54,436.00) scale(0.9938,1)" font-family="Liberation Sans" font-size="22.76" font-weight="normal" fill="#1e6e41">6</text>
<text transform="translate(18.54,470.00) scale(0.9938,1)" font-family="Liberation Sans" font-size="22.76" font-weight="normal" fill="#1e6e41">7</text>
<text transform="translate(18.92,504.00) scale(0.9617,1)" font-family="Liberation Sans" font-size="22.76" font-weight="normal" fill="#000000">8</text>
<text transform="translate(18.54,538.00) scale(0.9938,1)" font-family="Liberation Sans" font-size="22.76" font-weight="normal" fill="#000000">9</text>
<text transform="translate(13.50,572.00) scale(0.9133,1)" font-family="Liberation Sans" font-size="22.76" font-weight="normal" fill="#000000">10</text>
<text transform="translate(13.44,606.00) scale(0.9587,1)" font-family="Liberation Sans" font-size="22.76" font-weight="normal" fill="#000000">11</text>
<text transform="translate(13.48,640.00) scale(0.9274,1)" font-family="Liberation Sans" font-size="22.76" font-weight="normal" fill="#000000">12</text>
<text transform="translate(13.48,674.00) scale(0.9274,1)" font-family="Liberation Sans" font-size="22.76" font-weight="normal" fill="#000000">13</text>
<text transform="translate(340.99,265.70) scale(0.9765,1)" font-family="Liberation Sans" font-size="19.91" font-weight="bold" fill="#000000">Gadget Sales</text>
<text transform="translate(51.85,298.90) scale(0.9828,1)" font-family="Liberation Sans" font-size="17.92" font-weight="bold" fill="#000000">Gadgets</text>
<text transform="translate(247.60,298.70) scale(0.9263,1)" font-family="Liberation Sans" font-size="17.92" font-weight="bold" fill="#000000">Jan</text>
<text transform="translate(355.74,298.70) scale(1.0314,1)" font-family="Liberation Sans" font-size="17.92" font-weight="bold" fill="#000000">Feb</text>
<text transform="translate(463.34,298.70) scale(1.1215,1)" font-family="Liberation Sans" font-size="17.92" font-weight="bold" fill="#000000">Mar</text>
<text transform="translate(576.22,298.70) scale(0.9892,1)" font-family="Liberation Sans" font-size="17.92" font-weight="bold" fill="#000000">Apr</text>
<text transform="translate(682.26,298.70) scale(1.1077,1)" font-family="Liberation Sans" font-size="17.92" font-weight="bold" fill="#000000">May</text>
<text transform="translate(51.72,334.00) scale(1.0161,1)" font-family="Liberation Sans" font-size="18.63" font-weight="normal" fill="#000000">Laptops</text>
<text transform="translate(251.30,332.80) scale(1.0610,1)" font-family="Liberation Sans" font-size="18.20" font-weight="normal" fill="#000000">50</text>
<text transform="translate(361.50,332.80) scale(1.0610,1)" font-family="Liberation Sans" font-size="18.20" font-weight="normal" fill="#000000">45</text>
<text transform="translate(470.56,332.80) scale(1.0934,1)" font-family="Liberation Sans" font-size="18.20" font-weight="normal" fill="#000000">10</text>
<text transform="translate(581.19,332.80) scale(1.0770,1)" font-family="Liberation Sans" font-size="18.20" font-weight="normal" fill="#000000">35</text>
<text transform="translate(690.88,332.80) scale(1.0770,1)" font-family="Liberation Sans" font-size="18.20" font-weight="normal" fill="#000000">60</text>
<text transform="translate(51.77,368.00) scale(0.9828,1)" font-family="Liberation Sans" font-size="18.63" font-weight="normal" fill="#000000">Phones</text>
<text transform="translate(250.98,366.80) scale(1.0770,1)" font-family="Liberation Sans" font-size="18.20" font-weight="normal" fill="#000000">20</text>
<text transform="translate(360.54,366.80) scale(1.1103,1)" font-family="Liberation Sans" font-size="18.20" font-weight="normal" fill="#000000">19</text>
<text transform="translate(471.20,366.80) scale(1.0610,1)" font-family="Liberation Sans" font-size="18.20" font-weight="normal" fill="#000000">54</text>
<text transform="translate(581.19,366.80) scale(1.0770,1)" font-family="Liberation Sans" font-size="18.20" font-weight="normal" fill="#000000">39</text>
<text transform="translate(691.19,366.80) scale(1.0770,1)" font-family="Liberation Sans" font-size="18.20" font-weight="normal" fill="#000000">35</text>
<text transform="translate(51.72,402.00) scale(1.0145,1)" font-family="Liberation Sans" font-size="18.63" font-weight="normal" fill="#000000">Music Box</text>
<text transform="translate(251.30,400.80) scale(1.0610,1)" font-family="Liberation Sans" font-size="18.20" font-weight="normal" fill="#000000">34</text>
<text transform="translate(361.20,400.80) scale(1.0610,1)" font-family="Liberation Sans" font-size="18.20" font-weight="normal" fill="#000000">54</text>
<text transform="translate(470.87,400.80) scale(1.0934,1)" font-family="Liberation Sans" font-size="18.20" font-weight="normal" fill="#000000">67</text>
<text transform="translate(580.88,400.80) scale(1.0770,1)" font-family="Liberation Sans" font-size="18.20" font-weight="normal" fill="#000000">70</text>
<text transform="translate(691.19,400.80) scale(1.0770,1)" font-family="Liberation Sans" font-size="18.20" font-weight="normal" fill="#000000">89</text>
<text transform="translate(51.74,436.00) scale(1.0019,1)" font-family="Liberation Sans" font-size="18.63" font-weight="normal" fill="#000000">Keyboards</text>
<text transform="translate(251.30,434.80) scale(1.0610,1)" font-family="Liberation Sans" font-size="18.20" font-weight="normal" fill="#000000">50</text>
<text transform="translate(361.19,434.80) scale(1.0770,1)" font-family="Liberation Sans" font-size="18.20" font-weight="normal" fill="#000000">36</text>
<text transform="translate(470.87,434.80) scale(1.0934,1)" font-family="Liberation Sans" font-size="18.20" font-weight="normal" fill="#000000">26</text>
<text transform="translate(581.50,434.80) scale(1.0610,1)" font-family="Liberation Sans" font-size="18.20" font-weight="normal" fill="#000000">45</text>
<text transform="translate(690.87,434.80) scale(1.0934,1)" font-family="Liberation Sans" font-size="18.20" font-weight="normal" fill="#000000">23</text>
<text transform="translate(51.68,470.00) scale(1.0426,1)" font-family="Liberation Sans" font-size="18.63" font-weight="normal" fill="#000000">Mouse</text>
<text transform="translate(251.60,468.80) scale(1.0610,1)" font-family="Liberation Sans" font-size="18.20" font-weight="normal" fill="#000000">46</text>
<text transform="translate(361.20,468.80) scale(1.0610,1)" font-family="Liberation Sans" font-size="18.20" font-weight="normal" fill="#000000">50</text>
<text transform="translate(471.50,468.80) scale(1.0610,1)" font-family="Liberation Sans" font-size="18.20" font-weight="normal" fill="#000000">43</text>
<text transform="translate(580.88,468.80) scale(1.0770,1)" font-family="Liberation Sans" font-size="18.20" font-weight="normal" fill="#000000">60</text>
<text transform="translate(691.50,468.80) scale(1.0610,1)" font-family="Liberation Sans" font-size="18.20" font-weight="normal" fill="#000000">43</text>
<path d="M428.3,495 V547" fill="none" stroke="#000" stroke-width="3" />
<path d="M428.3,478 L434.3,496 L428.3,493 L422.3,496 Z" fill="#000" stroke="none" stroke-width="1" />
<text transform="translate(348.11,570.20) scale(1.0357,1)" font-family="Liberation Sans" font-size="24.18" font-weight="bold" fill="#111">Selected Data</text>
<rect x="990" y="208" width="21" height="470" fill="#e6e6e6" />
<rect x="993.5" y="210.5" width="14" height="14" fill="#ffffff" stroke="#ababab" stroke-width="1" />
<path d="M997,219 H1004 L1000.5,215 Z" fill="#6d6d6d" stroke="none" stroke-width="1" />
<rect x="993.5" y="225.5" width="14" height="262" fill="#ffffff" stroke="#ababab" stroke-width="1" />
<rect x="994" y="488" width="13" height="175" fill="#dadada" />
<rect x="993.5" y="663.5" width="14" height="14" fill="#ffffff" stroke="#ababab" stroke-width="1" />
<path d="M997,669 H1004 L1000.5,673 Z" fill="#6d6d6d" stroke="none" stroke-width="1" />
<rect x="1" y="678" width="1010" height="27" fill="#e6e6e6" />
<rect x="1" y="705" width="1010" height="1" fill="#d4d4d4" />
<path d="M32.5,687 L28,690.5 L32.5,694 Z" fill="#c2c2c2" stroke="none" stroke-width="1" />
<path d="M57,687 L61.5,690.5 L57,694 Z" fill="#c2c2c2" stroke="none" stroke-width="1" />
<rect x="101" y="681" width="1" height="20" fill="#a6a6a6" />
<rect x="166" y="678" width="1" height="23" fill="#a6a6a6" />
<rect x="167" y="678" width="64" height="22" fill="#ffffff" />
<rect x="230" y="678" width="1" height="23" fill="#a6a6a6" />
<rect x="166" y="700" width="65" height="2" fill="#1e6e41" />
<text transform="translate(113.81,695.00) scale(0.9224,1)" font-family="Liberation Sans" font-size="13.37" font-weight="normal" fill="#3a3a3a">Sheet1</text>
<text transform="translate(178.51,694.70) scale(0.9215,1)" font-family="Liberation Sans" font-size="13.37" font-weight="bold" fill="#1e6e41">Sheet2</text>
<circle cx="272" cy="690.7" r="7.3" fill="none" stroke="#c2c2c2" stroke-width="1.2"/>
<path d="M268,690.7 H276 M272,686.7 V694.7" fill="none" stroke="#c2c2c2" stroke-width="1.3" />
<rect x="607" y="686" width="1.5" height="1.5" fill="#9e9e9e" />
<rect x="607" y="690" width="1.5" height="1.5" fill="#9e9e9e" />
<rect x="607" y="694" width="1.5" height="1.5" fill="#9e9e9e" />
<rect x="624.5" y="684.5" width="14" height="14" fill="#ffffff" stroke="#ababab" stroke-width="1" />
<path d="M633,687.5 V694.5 L629,691 Z" fill="#555" stroke="none" stroke-width="1" />
<rect x="638.5" y="684.5" width="294" height="14" fill="#ffffff" stroke="#ababab" stroke-width="1" />
<rect x="933" y="685" width="42" height="13" fill="#dadada" />
<rect x="975.5" y="684.5" width="14" height="14" fill="#ffffff" stroke="#ababab" stroke-width="1" />
<path d="M981,687.5 V694.5 L985,691 Z" fill="#555" stroke="none" stroke-width="1" />
<rect x="1" y="706" width="1010" height="21" fill="#f3f2f1" />
<text transform="translate(8.34,720.20) scale(1.0000,1)" font-family="Liberation Sans" font-size="10.95" font-weight="normal" fill="#4a4a4a">Ready</text>
<text transform="translate(55.50,720.20) scale(1.0678,1)" font-family="Liberation Sans" font-size="10.95" font-weight="normal" fill="#4a4a4a">Workbook Statistics</text>
<text transform="translate(196.40,720.20) scale(1.0343,1)" font-family="Liberation Sans" font-size="10.95" font-weight="normal" fill="#4a4a4a">Accessibility: Investigate</text>
<text transform="translate(474.10,720.20) scale(0.9995,1)" font-family="Liberation Sans" font-size="10.95" font-weight="normal" fill="#4a4a4a">Average: 44.12</text>
<text transform="translate(563.75,720.20) scale(1.0685,1)" font-family="Liberation Sans" font-size="10.95" font-weight="normal" fill="#4a4a4a">Count: 30</text>
<text transform="translate(629.96,720.20) scale(1.0007,1)" font-family="Liberation Sans" font-size="10.95" font-weight="normal" fill="#4a4a4a">Sum: 1103</text>
<text transform="translate(964.84,720.20) scale(0.9704,1)" font-family="Liberation Sans" font-size="10.95" font-weight="normal" fill="#4a4a4a">172%</text>
<circle cx="183.8" cy="711.3" r="1.8" fill="none" stroke="#333" stroke-width="1"/>
<path d="M181.6,714.6 C180.3,714.3 179,713.9 178.5,712.8 C178.2,711.8 179.2,711 180.2,711.5 C181.6,712.3 182.6,713.4 183.8,713.4 C185.1,713.4 186.4,712.2 187.9,711.5 C189,711 189.9,712 189.4,713 C188.9,714 187.6,714.3 186.4,714.7 M181.6,714.8 L180.9,720.2 C180.7,721.7 181.2,722.6 182.1,722.6 C183,722.6 183.5,721.7 183.7,720.2 L184,718.8" fill="none" stroke="#333" stroke-width="1" />
<path d="M185.6,716.4 L191.6,722.6 M191.6,716.4 L185.6,722.6" fill="none" stroke="#333" stroke-width="1" />
<rect x="700" y="706" width="40" height="21" fill="#d4d4d4" />
<rect x="713.5" y="709.5" width="12" height="12" fill="none" stroke="#444" stroke-width="1.2" />
<rect x="717" y="709" width="1.2" height="13" fill="#444" />
<rect x="721" y="709" width="1.2" height="13" fill="#444" />
<rect x="713" y="713" width="13" height="1.2" fill="#444" />
<rect x="713" y="717" width="13" height="1.2" fill="#444" />
<rect x="753.5" y="709.5" width="13" height="12" fill="none" stroke="#444" stroke-width="1.2" />
<rect x="756.5" y="711.5" width="7" height="8" fill="none" stroke="#444" stroke-width="1.2" />
<rect x="758" y="713" width="4" height="1.1" fill="#444" />
<rect x="758" y="715" width="4" height="1.1" fill="#444" />
<rect x="758" y="717" width="4" height="1.1" fill="#444" />
<rect x="793.5" y="709.5" width="13" height="12" fill="none" stroke="#444" stroke-width="1.2" />
<path d="M793.5,716.5 H801.5 V709.5 M797.5,709.5 V716.5" fill="none" stroke="#444" stroke-width="1.2" />
<rect x="826" y="715" width="7.5" height="1.2" fill="#444" />
<rect x="839" y="715.5" width="100" height="1" fill="#6d6d6d" />
<rect x="889.5" y="712" width="1" height="8" fill="#6d6d6d" />
<rect x="898" y="711" width="5" height="11" fill="#6d6d6d" />
<rect x="944" y="715" width="7.5" height="1.2" fill="#444" />
<rect x="947.2" y="711.8" width="1.2" height="7.5" fill="#444" />
<rect x="0" y="35" width="1" height="693" fill="#217346" />
<rect x="1011" y="35" width="1" height="693" fill="#217346" />
<rect x="0" y="727" width="1012" height="1" fill="#217346" />
</svg>
</body></html>
